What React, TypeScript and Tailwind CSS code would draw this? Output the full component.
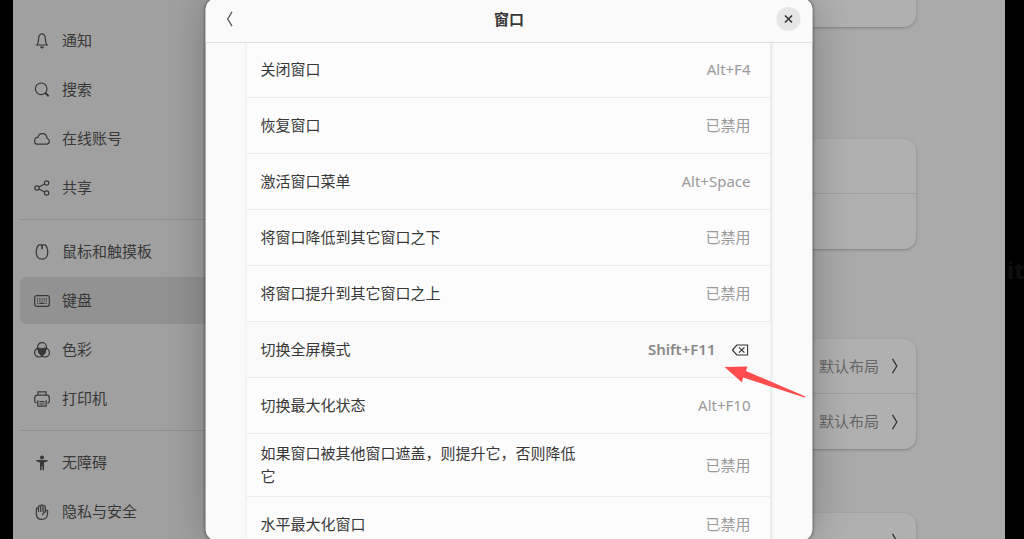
import { ReactNode } from 'react';

type IconName =
  | 'bell'
  | 'search'
  | 'cloud'
  | 'share'
  | 'mouse'
  | 'keyboard'
  | 'color'
  | 'printer'
  | 'access'
  | 'hand';

interface MenuItem {
  icon: IconName;
  label: string;
}

interface Shortcut {
  label: string;
  value: string;
  custom?: boolean;
}

const menuGroups: MenuItem[][] = [
  [
    { icon: 'bell', label: '通知' },
    { icon: 'search', label: '搜索' },
    { icon: 'cloud', label: '在线账号' },
    { icon: 'share', label: '共享' },
  ],
  [
    { icon: 'mouse', label: '鼠标和触摸板' },
    { icon: 'keyboard', label: '键盘' },
    { icon: 'color', label: '色彩' },
    { icon: 'printer', label: '打印机' },
  ],
  [
    { icon: 'access', label: '无障碍' },
    { icon: 'hand', label: '隐私与安全' },
  ],
];

const shortcuts: Shortcut[] = [
  { label: '关闭窗口', value: 'Alt+F4' },
  { label: '恢复窗口', value: '已禁用' },
  { label: '激活窗口菜单', value: 'Alt+Space' },
  { label: '将窗口降低到其它窗口之下', value: '已禁用' },
  { label: '将窗口提升到其它窗口之上', value: '已禁用' },
  { label: '切换全屏模式', value: 'Shift+F11', custom: true },
  { label: '切换最大化状态', value: 'Alt+F10' },
  { label: '如果窗口被其他窗口遮盖，则提升它，否则降低它', value: '已禁用' },
  { label: '水平最大化窗口', value: '已禁用' },
];

const iconShapes: Record<IconName, ReactNode> = {
  bell: (
    <>
      <path d="M1.800 12h12.400M3 11.800c1.100-1.300 1.500-2.600 1.500-4.800C4.500 3.200 5.700.9 8 .9s3.500 2.300 3.500 6.100c0 2.200.4 3.500 1.500 4.800" />
      <path d="M6 13.400h4a2 2 0 0 1-4 0z" fill="currentColor" stroke="none" />
    </>
  ),
  search: (
    <>
      <circle cx="7.200" cy="6.800" r="5.800" />
      <path d="m11.200 10.800 3.500 3.500" strokeWidth="2" />
    </>
  ),
  cloud: (
    <path d="M3.700 13.200h8.800a2.900 2.900 0 0 0 .7-5.700C12.800 4.600 10.800 2.600 8.400 2.600 6.200 2.600 4.500 4 3.900 6.300 2 6.400.6 8 .6 9.900c0 1.900 1.400 3.300 3.100 3.300z" />
  ),
  share: (
    <>
      <circle cx="3" cy="8" r="2.200" />
      <circle cx="12.600" cy="3" r="2.200" />
      <circle cx="12.600" cy="13" r="2.200" />
      <path d="m5 7 5.600-3M5 9l5.600 3" />
    </>
  ),
  mouse: (
    <>
      <path d="M5 .8h6c1.900 1.500 2.700 4.100 2.700 7.400 0 4.400-2.200 6.900-5.700 6.900S2.300 12.600 2.300 8.200C2.300 4.900 3.100 2.300 5 .8z" />
      <path d="M8 1v4.200" strokeWidth="1.600" />
    </>
  ),
  keyboard: (
    <>
      <rect x=".7" y="2.700" width="14.600" height="10.600" rx="2" />
      <path d="M3 5.800h10M3 8h10" strokeDasharray="1.200 1" />
      <path d="M3.200 10.400h1.200M5.400 10.400h5.200M11.600 10.400h1.200" />
    </>
  ),
  color: (
    <>
      <path d="M3.700 6.400 8 7l4.300-.6-.3 4.200-1.800 2.200L8 13.700l-2.200-.9L4 10.600z" fill="currentColor" stroke="none" />
      <circle cx="8" cy="5.200" r="4.500" />
      <circle cx="5" cy="10.600" r="4.400" />
      <circle cx="11" cy="10.600" r="4.400" />
    </>
  ),
  printer: (
    <>
      <path d="M4 4V.8h8V4M2.600 12C1.300 12 .7 11.200.7 9.800V6.700C.7 5 1.600 4.200 3.200 4.200h9.600c1.600 0 2.500.8 2.500 2.500v3.100c0 1.400-.6 2.200-1.900 2.200" />
      <path d="M3.800 9.200v5.900h8.400V9.200M5.400 10.700h5.200M5.400 13h5.200" />
    </>
  ),
  access: (
    <g fill="currentColor" stroke="none">
      <circle cx="8" cy="2.600" r="2" />
      <path d="M2.300 5h11.400v1.300L10 7.400v7.800H8.500v-3.700h-1v3.700H6V7.400L2.300 6.300z" />
    </g>
  ),
  hand: (
    <>
      <path d="M2.400 10V5c0-1.500 2.100-1.500 2.100 0V2.800c0-1.500 2.200-1.500 2.200 0V2c0-1.600 2.300-1.600 2.300 0v.8c0-1.500 2.200-1.500 2.200 0v5.400l.6-1.300c.6-1.200 2-.7 1.900.6l-.3 3c-.3 3-2.200 4.900-5.400 4.900-3.600 0-5.600-2-5.600-5.400z" />
      <path d="M4.500 5v3M6.700 2.800V8M9 2.800V8M11.200 8c-1.800.6-2.600 1.600-2.600 3.200" />
    </>
  ),
};

function MenuIcon({ name }: { name: IconName }) {
  return (
    <svg viewBox="0 0 16 16" className="size-4 shrink-0" fill="none" stroke="currentColor" strokeWidth="1.200" aria-hidden="true">
      {iconShapes[name]}
    </svg>
  );
}

function Chevron({ className }: { className: string }) {
  return (
    <svg viewBox="0 0 8 16" className={className} fill="none" stroke="currentColor" strokeWidth="1.300" aria-hidden="true">
      <path d="M1.500.8 5.800 8l-4.300 7.200" />
    </svg>
  );
}

function Sidebar() {
  return (
    <nav className="w-64 shrink-0 bg-[#a0a0a0] pl-[7px] pt-[17px]">
      {menuGroups.map((group, i) => (
        <ul
          key={i}
          className="flex flex-col gap-0.5 not-first:mt-2 not-first:border-t not-first:border-[#8e8e8e] not-first:pt-2"
        >
          {group.map((item) => (
            <li key={item.label}>
              <a
                href="#"
                className={`flex h-[47px] items-center gap-3 rounded-md px-3.5 ${
                  item.label === '键盘' ? 'bg-[#929292]' : ''
                }`}
              >
                <MenuIcon name={item.icon} />
                {item.label}
              </a>
            </li>
          ))}
        </ul>
      ))}
    </nav>
  );
}

function Card({ rows }: { rows: string[] }) {
  return (
    <ul className="divide-y divide-[#a0a0a0] rounded-xl bg-[#b0b0b0] shadow-[0_1px_3px_rgba(0,0,0,0.25)]">
      {rows.map((value, i) => (
        <li key={i} className="flex h-[55px] items-center justify-end gap-3 px-[17px] text-[#666]">
          {value}
          {value && <Chevron className="h-4 w-2 text-[#333]" />}
        </li>
      ))}
    </ul>
  );
}

function ShortcutRow({ label, value, custom }: Shortcut) {
  return (
    <li
      className={`flex min-h-14 items-center justify-between border-b border-[#ececec] px-3.5 py-2 ${
        custom ? 'bg-[#f9f9f9]' : ''
      }`}
    >
      <span className="max-w-80">{label}</span>
      <span className={`flex items-center px-1.5 ${custom ? 'font-semibold text-[#888]' : 'text-[#9a9a9a]'}`}>
        {value}
        {custom && (
          <button type="button" aria-label="重置" className="ml-4 mr-0.5 text-[#333]">
            <svg viewBox="0 0 17 12" className="h-3 w-[17px]" fill="none" stroke="currentColor" strokeWidth="1.200">
              <path d="M5.300 1h10.900v10H5.300L.9 6z" />
              <path d="m7.500 3.300 5.400 5.400M12.900 3.300 7.500 8.700" />
            </svg>
          </button>
        )}
      </span>
    </li>
  );
}

function WindowDialog() {
  return (
    <section
      role="dialog"
      aria-label="窗口"
      className="absolute -inset-y-0.5 left-1/2 flex w-[607px] -translate-x-1/2 flex-col overflow-hidden rounded-xl bg-[#fafafa] shadow-[0_0_3px_rgba(0,0,0,0.5),0_0_40px_rgba(0,0,0,0.25)]"
    >
      <header className="relative z-10 flex h-[45px] shrink-0 items-center justify-between border-b border-[#dedede] bg-[#fafafa] px-3 pb-0.5">
        <button type="button" aria-label="返回" className="flex size-6 items-center justify-center text-[#555]">
          <Chevron className="h-4 w-2 rotate-180" />
        </button>
        <h1 className="font-bold">窗口</h1>
        <button type="button" aria-label="关闭" className="flex size-6 items-center justify-center rounded-full bg-[#e6e6e6]">
          <svg viewBox="0 0 10 10" className="size-2.5" stroke="currentColor" strokeWidth="1.700" aria-hidden="true">
            <path d="m1.500 1.500 7 7M8.500 1.500l-7 7" />
          </svg>
        </button>
      </header>
      <ul className="-mt-px ml-[41px] mr-[42px] bg-[#fcfcfc] shadow-[0_0_3px_rgba(0,0,0,0.25)]">
        {shortcuts.map((s) => (
          <ShortcutRow key={s.label} {...s} />
        ))}
      </ul>
      {/* Seta de destaque sobre o atalho */}
      <svg viewBox="0 0 82 32" className="absolute left-[519px] top-[368px] z-10 h-8 w-[82px]" aria-hidden="true">
        <path d="M0 1 23 .5 21.500 5 81 30.500 80 31.500 18.500 11.500 17.500 16.500z" fill="#ff4d4d" />
      </svg>
    </section>
  );
}

export default function App() {
  return (
    <div className="flex h-screen overflow-hidden bg-black pl-[13px] font-['Noto_Sans','Noto_Sans_CJK_SC',sans-serif] text-[15px] leading-[23px] text-[#383838]">
      <main className="relative flex min-w-0 flex-1">
        <Sidebar />
        <div className="min-w-0 flex-1 overflow-hidden bg-[#aaaaaa] px-[89px]">
          <div className="-mt-[83px] flex flex-col">
            <Card rows={['', '']} />
            <div className="h-28" />
            <Card rows={['', '']} />
            <div className="h-[90px]" />
            <Card rows={['默认布局', '默认布局']} />
            <div className="h-16" />
            <Card rows={[' ']} />
          </div>
        </div>
        <WindowDialog />
      </main>
      <div className="flex w-[19px] items-center overflow-hidden pl-0.5 text-2xl font-bold text-[#0f0f0f]">it</div>
    </div>
  );
}
